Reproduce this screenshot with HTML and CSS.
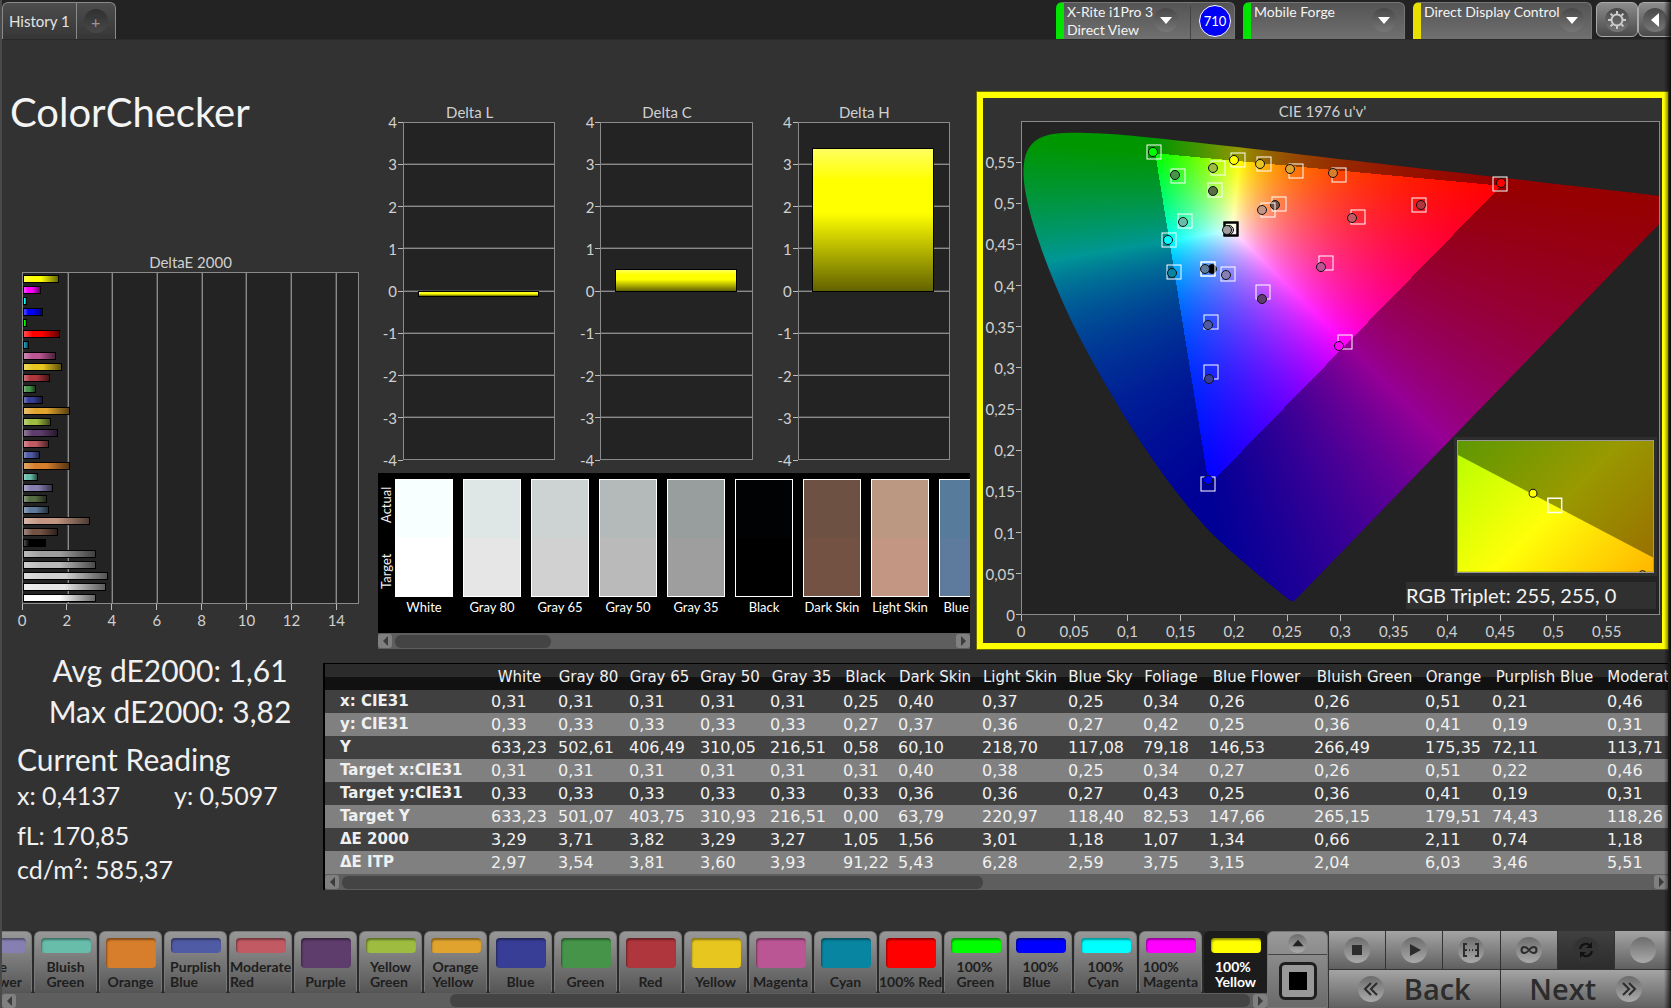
FILE: index.html
```html
<!DOCTYPE html>
<html lang="en">
<head>
<meta charset="utf-8">
<title>ColorChecker</title>
<link rel="stylesheet" href="styles.css">
</head>
<body>
<div class="app">
  <header class="topbar">
    <nav class="tabs">
      <button class="tab" type="button">History 1</button>
      <button class="tab tab-add" type="button" aria-label="Add history"><span class="knob">+</span></button>
    </nav>
    <div class="devices">
      <div class="device device-meter">
        <button class="device-main" type="button"><span class="device-name">X-Rite i1Pro 3<br>Direct View</span><span class="knob"><svg viewBox="0 0 14 10"><path d="M0 1h14L7 9z"/></svg></span></button>
        <span class="device-count"><span class="count">710</span></span>
      </div>
      <div class="device device-source">
        <button class="device-main" type="button"><span class="device-name">Mobile Forge</span><span class="knob"><svg viewBox="0 0 14 10"><path d="M0 1h14L7 9z"/></svg></span></button>
      </div>
      <div class="device device-display">
        <button class="device-main" type="button"><span class="device-name">Direct Display Control</span><span class="knob"><svg viewBox="0 0 14 10"><path d="M0 1h14L7 9z"/></svg></span></button>
      </div>
      <div class="tools">
        <button class="tool" type="button" aria-label="Settings"><span class="knob"><svg class="gear" viewBox="-10 -10 20 20"><circle r="5.5"/><path d="M0-6V-9M0 6V9M-6 0H-9M6 0H9M-4.3-4.3L-6.4-6.4M4.3-4.3L6.4-6.4M-4.3 4.3L-6.4 6.4M4.3 4.3L6.4 6.4"/></svg></span></button>
        <button class="tool" type="button" aria-label="Collapse"><span class="knob"><svg class="back-arrow" viewBox="0 0 8 14"><path d="M8 0v14L0 7z"/></svg></span></button>
      </div>
    </div>
  </header>

  <main class="workspace">
    <section class="charts">
      <div class="col-left">
        <h1 class="title">ColorChecker</h1>
        <figure class="de-chart">
          <figcaption class="chart-title">DeltaE 2000</figcaption>
          <div class="de-plot" id="de-plot"></div>
          <div class="x-axis" id="de-axis"></div>
        </figure>
      </div>
      <div class="col-mid">
        <div class="deltas" id="deltas"></div>
        <div class="compare">
          <div class="compare-body">
            <div class="compare-side"><span>Target</span><span>Actual</span></div>
            <div class="compare-list" id="compare"></div>
          </div>
          <div class="scroll"><button class="scroll-btn" type="button" aria-label="Scroll left"><svg viewBox="0 0 6 12"><path d="M6 0v12L0 6z"/></svg></button><div class="scroll-track"><div class="scroll-thumb" style="width:28%"></div></div><button class="scroll-btn" type="button" aria-label="Scroll right"><svg viewBox="0 0 6 12"><path d="M0 0v12l6-6z"/></svg></button></div>
        </div>
      </div>
      <figure class="cie">
        <figcaption class="chart-title">CIE 1976 u'v'</figcaption>
        <div class="cie-body">
          <div class="y-axis" id="cie-y"></div>
          <div class="cie-plot" id="cie-plot">
            <canvas class="gamut" id="gamut"></canvas>
            <svg class="inset" viewBox="0 0 198 130" preserveAspectRatio="none">
              <defs>
                <linearGradient id="in-gamut" gradientUnits="userSpaceOnUse" x1="0" y1="0" x2="165" y2="165"><stop offset="0" stop-color="#b4ff00"/><stop offset=".5" stop-color="#ffff08"/><stop offset="1" stop-color="#ffb400"/></linearGradient>
                <linearGradient id="out-gamut" gradientUnits="userSpaceOnUse" x1="0" y1="0" x2="165" y2="165"><stop offset="0" stop-color="#5f9900"/><stop offset=".5" stop-color="#999900"/><stop offset="1" stop-color="#996c00"/></linearGradient>
              </defs>
              <path fill="url(#out-gamut)" d="M0 0h198v130H0z"/>
              <path fill="url(#in-gamut)" d="M0 14l198 102v14H0z"/>
              <circle cx="76" cy="52" r="4" fill="#ff0" stroke="#111"/>
              <path d="M91 57h14v14H91z" fill="none" stroke="#fff" stroke-width="1.5"/>
              <circle cx="187" cy="133" r="4" fill="#ecc622" stroke="#111"/>
            </svg>
            <div class="triplet">RGB Triplet: 255, 255, 0</div>
          </div>
        </div>
        <div class="x-axis cie-x" id="cie-x"></div>
      </figure>
    </section>

    <section class="data">
      <div class="readings">
        <p class="stat">Avg dE2000: 1,61</p>
        <p class="stat">Max dE2000: 3,82</p>
        <h2 class="reading-title">Current Reading</h2>
        <p class="xy"><span>x: 0,4137</span><span>y: 0,5097</span></p>
        <p class="lum">fL: 170,85</p>
        <p class="lum">cd/m²: 585,37</p>
      </div>
      <div class="results">
        <div class="results-view"><table class="results-table" id="results"></table></div>
        <div class="scroll"><button class="scroll-btn" type="button" aria-label="Scroll left"><svg viewBox="0 0 6 12"><path d="M6 0v12L0 6z"/></svg></button><div class="scroll-track"><div class="scroll-thumb" style="width:49%"></div></div><button class="scroll-btn" type="button" aria-label="Scroll right"><svg viewBox="0 0 6 12"><path d="M0 0v12l6-6z"/></svg></button></div>
      </div>
    </section>
  </main>

  <footer class="bottombar">
    <div class="patches">
      <div class="patch-list" id="patches"></div>
      <div class="scroll"><button class="scroll-btn" type="button" aria-label="Scroll left"><svg viewBox="0 0 6 12"><path d="M6 0v12L0 6z"/></svg></button><div class="scroll-track track-end"><div class="scroll-thumb" style="width:65%"></div></div><button class="scroll-btn" type="button" aria-label="Scroll right"><svg viewBox="0 0 6 12"><path d="M0 0v12l6-6z"/></svg></button></div>
    </div>
    <div class="pattern">
      <button class="pattern-up" type="button" aria-label="Expand"><span class="knob"><svg viewBox="0 0 14 10"><path d="M0 9h14L7 1z"/></svg></span></button>
      <button class="pattern-win" type="button" aria-label="Pattern window"><span class="win-frame"><span class="win-box"></span></span></button>
    </div>
    <div class="transport">
      <div class="transport-row">
        <button class="tbtn" type="button" aria-label="Stop"><span class="knob"><svg viewBox="0 0 24 24"><path d="M7 7h10v10H7z"/></svg></span></button>
        <button class="tbtn" type="button" aria-label="Play"><span class="knob"><svg viewBox="0 0 24 24"><path d="M8 6l11 6-11 6z"/></svg></span></button>
        <button class="tbtn" type="button" aria-label="Range"><span class="knob"><svg class="line" viewBox="0 0 24 24"><path d="M8 6H5v12h3M16 6h3v12h-3M5 12h3M16 12h3M10 12h1M13 12h1"/></svg></span></button>
        <button class="tbtn" type="button" aria-label="Loop"><span class="knob"><svg class="line" viewBox="0 0 24 24"><path d="M12 12C10 9.500 9 9 7.500 9a3 3 0 0 0 0 6c1.500 0 2.500-.5 4.500-3s3-3 4.500-3a3 3 0 0 1 0 6c-1.500 0-2.500-.5-4.500-3z"/></svg></span></button>
        <button class="tbtn active" type="button" aria-label="Refresh"><span class="knob"><svg class="line" viewBox="0 0 24 24"><path d="M6 11a6 6 0 0 1 10-3.500M18 13a6 6 0 0 1-10 3.500"/><path class="solid" d="M18 4v6h-6zM6 20v-6h6z"/></svg></span></button>
        <button class="tbtn" type="button" aria-label="Record"><span class="knob"></span></button>
      </div>
      <div class="transport-row">
        <button class="tbtn nav" type="button"><span class="knob"><svg class="line" viewBox="0 0 24 24"><path d="M12 6l-6 6 6 6M18 6l-6 6 6 6"/></svg></span>Back</button>
        <button class="tbtn nav" type="button">Next<span class="knob"><svg class="line" viewBox="0 0 24 24"><path d="M6 6l6 6-6 6M12 6l6 6-6 6"/></svg></span></button>
      </div>
    </div>
  </footer>
</div>
<script src="app.js"></script>
</body>
</html>
```
FILE: styles.css
```css
* { box-sizing: border-box; }
body { margin: 0; background: #323232; color: #f0f0f0; font-family: Lato, "Liberation Sans", sans-serif; font-size: 14px; }
h1, h2, p, figure { margin: 0; font-weight: 400; }
button { margin: 0; padding: 0; border: 0; background: none; color: inherit; font: inherit; }
svg { display: block; }

.app { position: relative; display: flex; flex-direction: column; min-height: 100vh; border-left: 2px solid #4a4a4a; overflow: hidden; }
.app::after { content: ""; position: absolute; top: 0; right: 0; bottom: 0; width: 7px; background: linear-gradient(90deg, transparent, rgba(0,0,0,.75)); pointer-events: none; }

.knob { display: flex; align-items: center; justify-content: center; flex: none; width: 24px; height: 24px; border-radius: 50%; background: linear-gradient(#484848, #777); }

/* Top bar */
.topbar { display: flex; justify-content: space-between; height: 40px; padding-top: 2px; background: #232323; border-bottom: 1px solid #2a2a2a; }
.tabs { display: flex; border: 1px solid #8a8a8a; border-bottom: 0; border-radius: 6px 6px 0 0; background: linear-gradient(#4d4d4d, #363636); }
.tab { padding: 0 6px; font-size: 15px; color: #e4e4e4; }
.tab-add { padding: 0 7px; border-left: 1px solid #8a8a8a; color: #999; }
.tab-add .knob { background: linear-gradient(#303030, #484848); font-size: 16px; }
.devices { display: flex; gap: 8px; }
.device { display: flex; overflow: hidden; border: 1px solid #777; border-bottom: 0; border-left: 8px solid #00e400; border-radius: 6px 6px 0 0; background: linear-gradient(#545454, #707070); }
.device-main { display: flex; flex: 1; justify-content: space-between; align-items: flex-start; padding: 0 8px 0 3px; font-size: 14px; line-height: 18px; text-align: left; color: #f4f4f4; }
.device-name { min-width: 0; flex: 1; white-space: nowrap; }
.device-main .knob { margin-top: 5px; }
.device-main svg { width: 12px; height: 9px; fill: #fff; }
.device-meter { width: 179px; }
.device-source { width: 162px; }
.device-display { width: 179px; border-left-color: #e8e000; }
.device-meter .device-main { padding-right: 12px; }
.device-count { display: flex; align-items: center; padding: 0 3px 0 8px; margin-top: 3px; border-left: 1px solid #444; }
.count { display: flex; align-items: center; justify-content: center; width: 32px; height: 32px; margin-top: -3px; border: 1px solid #fff; border-radius: 50%; background: #0000f8; font-size: 13px; color: #fff; }
.tools { display: flex; margin-left: -4px; }
.tool { display: flex; align-items: center; justify-content: center; width: 42px; height: 35px; border: 1px solid #aaa; border-radius: 6px; background: linear-gradient(#8c8c8c, #4a4a4a); }
.tool:last-child { width: 33px; border-right: 0; border-radius: 6px 0 0 6px; }
.gear { width: 20px; height: 20px; fill: none; stroke: #ccc; stroke-width: 2; }
.back-arrow { width: 8px; height: 14px; fill: #fff; }

/* Charts */
.workspace { flex: 1; padding-right: 3px; }
.charts { display: grid; grid-template-columns: minmax(0, 369fr) minmax(0, 599fr) minmax(0, 698fr); padding-top: 52px; }
.chart-title { font-size: 15px; line-height: 19px; text-align: center; color: #d0d0d0; }
.col-left { display: flex; flex-direction: column; justify-content: space-between; padding: 0 12px 15px 8px; }
.title { font-size: 40px; line-height: 40px; color: #f4f4f4; }
.de-chart { padding-left: 12px; }
.de-plot { position: relative; height: 332px; border: 1px solid #8a8a8a; background: #232323; }
.de-grid { display: grid; grid-template-columns: repeat(7, 2fr) 1fr; position: absolute; inset: 0; }
.de-grid i + i { border-left: 1px solid #8a8a8a; box-shadow: -1px 0 #4c4c4c; }
.de-bars { position: relative; display: flex; flex-direction: column; justify-content: space-around; height: 100%; }
.de-bar { height: 8px; border: 1px solid #000; background-image: linear-gradient(90deg, rgba(255,255,255,.3), transparent 25%, transparent 50%, rgba(0,0,0,.6)); }

.x-axis { display: flex; justify-content: space-between; height: 30px; color: #d0d0d0; font-size: 15px; line-height: 20px; }
.x-tick { display: flex; flex-direction: column; align-items: center; width: 0; white-space: nowrap; }
.x-tick::before { content: ""; width: 1px; height: 6px; flex: none; background: #bbb; }
.y-axis { display: flex; flex-direction: column; justify-content: space-between; color: #d0d0d0; font-size: 15px; }
.y-tick { display: flex; align-items: center; justify-content: flex-end; gap: 1px; height: 0; }
.y-tick::after { content: ""; width: 5px; height: 1px; background: #bbb; }
.tick-blank { visibility: hidden; }

.col-mid { display: flex; flex-direction: column; padding: 11px 0 0; }
.deltas { display: grid; grid-template-columns: repeat(3, minmax(0, 1fr)); margin-right: 7px; }
.delta-body { display: grid; grid-template-columns: 32px minmax(0, 1fr); height: 338px; padding-right: 13px; }
.delta-plot { position: relative; display: flex; flex-direction: column; border: 1px solid #8a8a8a; background: #232323; }
.delta-line { flex: 1; }
.delta-line + .delta-line { border-top: 1px solid #8a8a8a; box-shadow: 0 -1px #4c4c4c; }
.delta-bar { position: absolute; left: 9%; right: 10%; border: 1px solid #000; background: linear-gradient(#ffff60, #ff0 22%, #ff0 45%, #626200); }

.compare { margin: 13px 0 0 7px; }
.compare-body { display: flex; height: 160px; padding: 6px 0; overflow: hidden; background: #000; }
.compare-side { display: flex; justify-content: space-between; flex: none; width: 17px; height: 118px; padding: 8px 0; writing-mode: vertical-rl; transform: rotate(180deg); font-size: 13px; line-height: 17px; }
.compare-list { display: flex; gap: 10px; min-width: 0; overflow: hidden; }
.compare-item { flex: none; width: 58px; font-size: 13px; line-height: 20px; text-align: center; white-space: nowrap; color: #fff; }
.compare-swatch { height: 118px; border: 1px solid #fff; }

.scroll { display: flex; align-items: center; height: 16px; background: #5e5e5e; }
.scroll-btn { display: flex; align-items: center; justify-content: center; flex: none; width: 14px; height: 14px; border-radius: 3px; background: #808080; }
.scroll-btn svg { width: 5px; height: 10px; fill: #3c3c3c; }
.scroll-track { display: flex; flex: 1; padding: 0 3px; }
.track-end { justify-content: flex-end; }
.scroll-thumb { height: 13px; border-radius: 6px; background: #444; }

.cie { display: flex; flex-direction: column; margin-left: 7px; border: 6px solid #ff0; outline: 1px solid #6b6b00; padding-top: 4px; height: 557px; }
.cie-body { display: grid; grid-template-columns: 38px minmax(0, 1fr); flex: 1; padding-right: 2px; }
.cie-plot { position: relative; border: 1px solid #8a8a8a; background: #232323; }
.gamut { position: absolute; inset: 0; width: 100%; height: 100%; }
.cie-x { flex: none; padding: 0 2px 0 38px; height: 28px; }
.mark { position: absolute; transform: translate(-50%, -50%); }
.mark-target { width: 15px; height: 15px; border: 1px solid #fff; }
.mark-white { border: 2px solid #000; }
.mark-actual { width: 10px; height: 10px; border: 1px solid #111; border-radius: 50%; }
.inset { position: absolute; right: 5px; bottom: 41px; width: 31%; height: 27%; border: 1px solid #999; outline: 3px solid #2e2e2e; }
.triplet { position: absolute; right: 3px; bottom: 5px; width: 250px; font-size: 20px; line-height: 27px; background: #303030; color: #f4f4f4; }

/* Readings and results */
.data { display: grid; grid-template-columns: minmax(0, 321fr) minmax(0, 1345fr); padding-top: 14px; }
.readings { display: flex; flex-direction: column; padding-left: 15px; }
.stat { font-size: 30px; line-height: 41px; text-align: center; }
.stat:first-child { margin-top: -13px; }
.reading-title { margin-top: 9px; font-size: 30px; line-height: 36px; }
.xy { display: grid; grid-template-columns: 157px 1fr; font-size: 25px; line-height: 36px; }
.lum { margin-top: 2px; font-size: 25px; line-height: 32px; }
.xy + .lum { margin-top: 6px; }
.results { border: 2px solid #000; border-width: 1px 0 0 2px; }
.results-view { overflow: hidden; }
.results-table { table-layout: fixed; border-collapse: collapse; font-family: "DejaVu Sans", "Noto Sans", sans-serif; font-size: 16px; line-height: 23px; white-space: nowrap; }
.results-table th, .results-table td { height: 23px; padding: 0 0 0 3px; overflow: visible; text-align: left; font-weight: 400; }
.results-table thead { background: linear-gradient(#2b2b2b 50%, #111 50%); }
.results-table thead th { height: 26px; padding: 0 4px 0 0; font-size: 15px; text-align: center; }
.results-table tbody tr { background: #404040; }
.results-table tbody tr:nth-child(even) { background: #808080; }
.results-table tbody th { padding-left: 15px; font-size: 15px; font-weight: 700; }

/* Bottom bar */
.bottombar { display: flex; height: 77px; }
.patches { flex: 1; min-width: 0; }
.patch-list { display: flex; justify-content: flex-end; gap: 2px; height: 62px; overflow: hidden; background: #2a2a2a; }
.patch { display: flex; flex-direction: column; justify-content: space-between; align-items: center; flex: none; width: 63px; padding: 6px 0 4px; border: 1px solid #777; border-bottom: 0; border-radius: 6px 6px 3px 3px; background: linear-gradient(#989898, #555); color: #1e1e1e; font-size: 14px; font-weight: 700; line-height: 15px; text-align: left; white-space: nowrap; }
.patch-color { width: 50px; height: 15px; border-radius: 4px; box-shadow: inset 1px 2px 2px rgba(0,0,0,.4); }
.patch-tall { height: 30px; }
.patch-selected { background: #1c1c1c; border-color: #1c1c1c; color: #fff; }
.patches .scroll { height: 15px; }
.pattern { display: flex; flex-direction: column; width: 61px; border: 1px solid #777; border-radius: 6px 6px 0 0; background: linear-gradient(#999, #6a6a6a); }
.pattern-up { display: flex; justify-content: center; align-items: center; height: 23px; border-bottom: 1px solid #444; }
.pattern-up .knob, .transport .knob { background: linear-gradient(#6c6c6c, #aaa); }
.pattern-up .knob { width: 19px; height: 19px; }
.pattern-up svg { width: 12px; height: 8px; fill: #222; }
.pattern-win { display: flex; flex: 1; align-items: center; justify-content: center; }
.win-frame { display: flex; align-items: center; justify-content: center; width: 38px; height: 38px; border: 3px solid #1e1e1e; border-radius: 6px; background: #999; }
.win-box { width: 18px; height: 18px; background: #000; }
.transport { display: grid; grid-template-rows: 1fr 1fr; gap: 1px; width: 343px; padding-left: 1px; background: #333; }
.transport-row { display: flex; gap: 1px; }
.tbtn { display: flex; flex: 1; align-items: center; justify-content: center; background: linear-gradient(#a4a4a4, #606060); color: #2c2c2c; }
.tbtn.active { background: linear-gradient(#404040, #2c2c2c); }
.transport .active .knob { background: #333; }
.tbtn .knob { width: 26px; height: 26px; }
.tbtn svg { width: 24px; height: 24px; fill: #2c2c2c; }
.tbtn .line { fill: none; stroke: #2c2c2c; stroke-width: 2; }
.active .line { stroke: #111; }
.line .solid { fill: #111; stroke: none; }
.nav { gap: 20px; font: 600 29px/38px "Open Sans", "Noto Sans", sans-serif; }
```
FILE: app.js
```js
const patches = [
  // name, colour, measured colour, dE2000
  ["White", "#ffffff", "#f7ffff", 3.29],
  ["Gray 80", "#e6e6e6", "#dfe7e6", 3.71],
  ["Gray 65", "#d1d1d1", "#ccd3d2", 3.82],
  ["Gray 50", "#bababa", "#b4baba", 3.29],
  ["Gray 35", "#9e9e9e", "#989e9d", 3.27],
  ["Black", "#000000", "#000204", 1.05],
  ["Dark Skin", "#735244", "#6d5142", 1.56],
  ["Light Skin", "#c29682", "#ba9881", 3.01],
  ["Blue Sky", "#5e7a9c", "#577b9b", 1.18],
  ["Foliage", "#576c43", "#576c43", 1.07],
  ["Blue Flower", "#8580b1", "#8580b1", 1.34],
  ["Bluish Green", "#67bdaa", "#67bdaa", 0.66],
  ["Orange", "#d67e2c", "#d67e2c", 2.11],
  ["Purplish Blue", "#505ba6", "#505ba6", 0.74],
  ["Moderate Red", "#c15a63", "#c15a63", 1.18],
  ["Purple", "#5e3c6c", "#5e3c6c", 1.56],
  ["Yellow Green", "#9dbc40", "#9dbc40", 1.25],
  ["Orange Yellow", "#e0a32e", "#e0a32e", 2.1],
  ["Blue", "#383d96", "#383d96", 0.9],
  ["Green", "#469449", "#469449", 0.57],
  ["Red", "#af363c", "#af363c", 1.2],
  ["Yellow", "#e7c71f", "#e7c71f", 1.73],
  ["Magenta", "#bb5695", "#bb5695", 1.47],
  ["Cyan", "#0885a1", "#0885a1", 0.25],
  ["100% Red", "#ff0000", "#ff0000", 1.65],
  ["100% Green", "#00ff00", "#00ff00", 0.2],
  ["100% Blue", "#0000ff", "#0000ff", 0.9],
  ["100% Cyan", "#00ffff", "#00ffff", 0.2],
  ["100% Magenta", "#ff00ff", "#ff00ff", 0.81],
  ["100% Yellow", "#ffff00", "#ffff00", 1.61],
];
const byId = (id) => document.getElementById(id);
const tick = (cls, text) => `<span class="${cls}${text === "" ? " tick-blank" : ""}">${text}</span>`;
const comma = (n) => String(+n.toFixed(2)).replace(".", ",");

// DeltaE 2000 bars
byId("de-plot").innerHTML = `<div class="de-grid">${"<i></i>".repeat(8)}</div><div class="de-bars">` +
  [...patches].reverse().map((p) => `<div class="de-bar" style="width:${p[3] / 15 * 100}%;background-color:${p[1]}"></div>`).join("") + "</div>";
byId("de-axis").innerHTML = Array.from({ length: 16 }, (_, i) => tick("x-tick", i % 2 ? "" : i)).join("");

// Delta L / C / H
byId("deltas").innerHTML = [["L", -0.13], ["C", 0.52], ["H", 3.4]].map(([n, v]) => {
  const top = (4 - Math.max(v, 0)) / 8 * 100, h = Math.abs(v) / 8 * 100;
  return `<figure><figcaption class="chart-title">Delta ${n}</figcaption><div class="delta-body"><div class="y-axis">` +
    [4, 3, 2, 1, 0, -1, -2, -3, -4].map((t) => tick("y-tick", t)).join("") +
    `</div><div class="delta-plot">${'<div class="delta-line"></div>'.repeat(8)}<div class="delta-bar" style="top:${top}%;height:calc(${h}% + 1px)"></div></div></div></figure>`;
}).join("");

// Actual against target
byId("compare").innerHTML = patches.slice(0, 9).map((p) =>
  `<div class="compare-item"><div class="compare-swatch" style="background:linear-gradient(${p[2]} 50%,${p[1]} 50%)"></div>${p[0]}</div>`).join("");

// Results table
const widths = [163, 67, 71, 71, 70, 73, 55, 84, 86, 75, 66, 105, 111, 67, 115, 115];
const rows = {
  "x: CIE31": "0,31 0,31 0,31 0,31 0,31 0,25 0,40 0,37 0,25 0,34 0,26 0,26 0,51 0,21 0,46",
  "y: CIE31": "0,33 0,33 0,33 0,33 0,33 0,27 0,37 0,36 0,27 0,42 0,25 0,36 0,41 0,19 0,31",
  "Y": "633,23 502,61 406,49 310,05 216,51 0,58 60,10 218,70 117,08 79,18 146,53 266,49 175,35 72,11 113,71",
  "Target x:CIE31": "0,31 0,31 0,31 0,31 0,31 0,31 0,40 0,38 0,25 0,34 0,27 0,26 0,51 0,22 0,46",
  "Target y:CIE31": "0,33 0,33 0,33 0,33 0,33 0,33 0,36 0,36 0,27 0,43 0,25 0,36 0,41 0,19 0,31",
  "Target Y": "633,23 501,07 403,75 310,93 216,51 0,00 63,79 220,97 118,40 82,53 147,66 265,15 179,51 74,43 118,26",
  "ΔE 2000": "3,29 3,71 3,82 3,29 3,27 1,05 1,56 3,01 1,18 1,07 1,34 0,66 2,11 0,74 1,18",
  "ΔE ITP": "2,97 3,54 3,81 3,60 3,93 91,22 5,43 6,28 2,59 3,75 3,15 2,04 6,03 3,46 5,51",
};
const table = byId("results");
table.style.width = widths.reduce((a, b) => a + b) + "px";
table.innerHTML = `<colgroup>${widths.map((w) => `<col style="width:${w}px">`).join("")}</colgroup><thead><tr><th></th>` +
  patches.slice(0, 15).map((p) => `<th scope="col">${p[0]}</th>`).join("") + "</tr></thead><tbody>" +
  Object.entries(rows).map(([k, v]) => `<tr><th scope="row">${k}</th>${v.split(" ").map((c) => `<td>${c}</td>`).join("")}</tr>`).join("") + "</tbody>";

// Patch buttons
byId("patches").innerHTML = patches.slice(10).map(([name, color]) => {
  const two = name.includes(" ") && name !== "100% Red";
  const label = two ? name.replace(" ", "<br>") : name;
  return `<button type="button" class="patch${name === "100% Yellow" ? " patch-selected" : ""}"><span class="patch-color${two ? "" : " patch-tall"}" style="background:${color}"></span><span>${label}</span></button>`;
}).join("");

// CIE 1976 chart
const steps = Array.from({ length: 13 }, (_, i) => i * 0.05);
byId("cie-y").innerHTML = [...steps].reverse().map((v, i) => tick("y-tick", i ? comma(v) : "")).join("");
byId("cie-x").innerHTML = steps.map((v, i) => tick("x-tick", i < 12 ? comma(v) : "")).join("");

// colour, target u' v', measured u' v'
const points = [
  ["#00ff00", .1242, .5638, .1236, .5638], ["#469449", .1467, .5346, .1445, .5355],
  ["#9dbc40", .1842, .5442, .1802, .5442], ["#ffff00", .2030, .5542, .1993, .5542],
  ["#e7c71f", .2283, .5490, .2246, .5490], ["#e0a32e", .2584, .5407, .2527, .5425],
  ["#576c43", .1814, .5176, .1799, .5159], ["#735244", .2424, .5002, .2387, .4989],
  ["#c29682", .2321, .4928, .2262, .4924], ["#67bdaa", .1533, .4797, .1520, .4776],
  ["#00ffff", .1383, .4562, .1379, .4558], ["#0885a1", .1430, .4174, .1417, .4161],
  ["#000000", .1749, .4209, .1786, .4209], ["#5e7a9c", .1749, .4209, .1724, .4209],
  ["#8580b1", .1943, .4148, .1917, .4139], ["#5e3c6c", .2274, .3930, .2262, .3843],
  ["#505ba6", .1777, .3564, .1752, .3529], ["#383d96", .1777, .2954, .1761, .2867],
  ["#0000ff", .1749, .1586, .1752, .1634], ["#d67e2c", .2988, .5355, .2928, .5377],
  ["#ff0000", .4499, .5242, .4508, .5255], ["#af363c", .3738, .4989, .3757, .4989],
  ["#c15a63", .3166, .4845, .3113, .4828], ["#bb5695", .2862, .4283, .2816, .4231],
  ["#ff00ff", .3044, .3320, .2988, .3268], ["#bababa", .1964, .4697, .1950, .4688],
  ["#9e9e9e", .1964, .4697, .1930, .4688],
];
const at = (u, v) => `left:${u / .6 * 100}%;top:${(1 - v / .6) * 100}%`;
byId("gamut").insertAdjacentHTML("afterend", points.map(([c, tu, tv, u, v], i) =>
  `<span class="mark mark-target${i > 24 ? " mark-white" : ""}" style="${at(tu, tv)}"></span><span class="mark mark-actual" style="${at(u, v)};background:${c}"></span>`).join(""));

const locus = [[.1741, .005], [.1714, .0051], [.1644, .0109], [.1566, .0177], [.144, .0297], [.1355, .0399], [.1241, .0578], [.1096, .0868],
  [.0913, .1327], [.0687, .2007], [.0454, .295], [.0235, .4127], [.0082, .5384], [.0039, .6548], [.0139, .7502], [.0389, .812],
  [.0743, .8338], [.1142, .8262], [.1547, .8059], [.2296, .7543], [.3016, .6923], [.3731, .6245], [.4441, .5547], [.5125, .4866],
  [.5752, .4242], [.627, .3725], [.6658, .334], [.6915, .3083], [.719, .2809], [.7347, .2653]]
  .map(([x, y]) => { const d = -2 * x + 12 * y + 3; return [4 * x / d, 9 * y / d]; });

function drawGamut() {
  const canvas = byId("gamut"), w = canvas.width = canvas.clientWidth, h = canvas.height = canvas.clientHeight;
  const layer = document.createElement("canvas");
  layer.width = w; layer.height = h;
  const lctx = layer.getContext("2d"), img = lctx.createImageData(w, h);
  for (let j = 0; j < h; j++) for (let i = 0; i < w; i++) {
    const u = i / w * .6, v = Math.max((1 - j / h) * .6, .001);
    const X = 9 * u / (4 * v), Z = (12 - 3 * u - 20 * v) / (4 * v);
    const rgb = [3.2406 * X - 1.5372 - .4986 * Z, -.9689 * X + 1.8758 + .0415 * Z, .0557 * X - .204 + 1.057 * Z];
    const k = Math.min(...rgb) < 0 ? 150 : 255, m = Math.max(...rgb), o = (j * w + i) * 4;
    rgb.forEach((c, n) => { img.data[o + n] = k * Math.max(c, 0) / m; });
    img.data[o + 3] = 255;
  }
  lctx.putImageData(img, 0, 0);
  const ctx = canvas.getContext("2d"), p = locus.map(([u, v]) => [u / .6 * w, (1 - v / .6) * h]);
  ctx.beginPath();
  ctx.moveTo(...p[0]);
  for (let i = 0; i < p.length - 1; i++) {
    const a = p[i - 1] || p[i], b = p[i], c = p[i + 1], d = p[i + 2] || c;
    ctx.bezierCurveTo(b[0] + (c[0] - a[0]) / 6, b[1] + (c[1] - a[1]) / 6, c[0] - (d[0] - b[0]) / 6, c[1] - (d[1] - b[1]) / 6, c[0], c[1]);
  }
  ctx.closePath();
  ctx.clip();
  ctx.drawImage(layer, 0, 0);
}
drawGamut();
addEventListener("resize", drawGamut);
```
